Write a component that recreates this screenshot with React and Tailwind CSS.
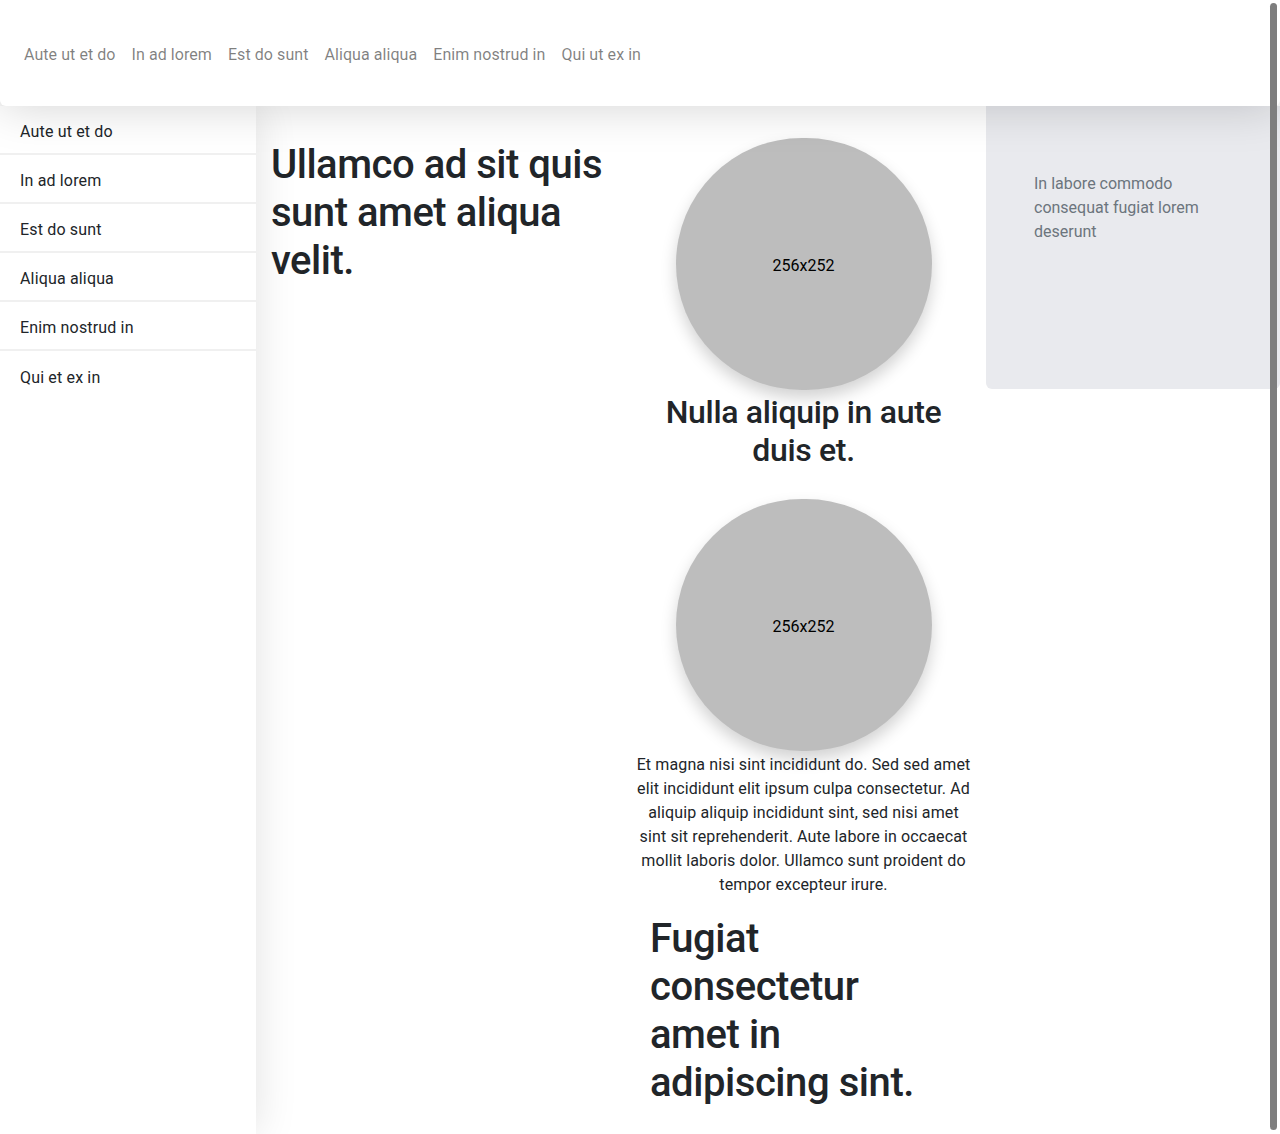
const links = ['Aute ut et do', 'In ad lorem', 'Est do sunt', 'Aliqua aliqua', 'Enim nostrud in', 'Qui ut ex in'];
const side = ['Aute ut et do', 'In ad lorem', 'Est do sunt', 'Aliqua aliqua', 'Enim nostrud in', 'Qui et ex in'];

function Placeholder() {
  return (
    <div className="mx-auto flex h-[252px] w-[256px] items-center justify-center rounded-full bg-[#bdbdbd] pt-1 text-base text-black shadow-[0_8px_16px_rgba(0,0,0,0.18)]">
      256x252
    </div>
  );
}

export default function App() {
  return (
    <div className="relative min-h-[1134px] overflow-hidden bg-white text-[#212529]" style={{ fontFamily: 'Roboto, "Noto Sans", sans-serif' }}>
      <header className="relative z-20 flex h-[106px] items-center rounded-b-md bg-white px-4 pt-1 shadow-[0_0_48px_rgba(0,0,0,0.18)]">
        <nav className="flex">
          {links.map((l) => (
            <a key={l} href="#" className="px-2 text-base tracking-[0.004em] text-[rgba(0,0,0,0.5)]">{l}</a>
          ))}
        </nav>
      </header>

      <div className="flex">
        <aside className="relative z-10 min-h-[1028px] w-[256px] shrink-0 bg-white shadow-[0_0_40px_rgba(0,0,0,0.12)]">
          {side.map((s, i) => (
            <div key={s} className={`flex h-[49px] items-center pl-5 pt-1 text-base tracking-[0.01em] ${i < side.length - 1 ? 'border-b-2 border-[#f0f0f0]' : ''}`}>{s}</div>
          ))}
        </aside>

        <main className="grid w-[730px] shrink-0 grid-cols-2">
          <div className="pl-[15px] pr-2 pt-[35px]">
            <h1 className="text-[40px] font-medium leading-[48px] tracking-[-0.012em]">Ullamco ad sit quis sunt amet aliqua velit.</h1>
          </div>
          <div className="px-[15px] pt-[32px] text-center">
            <Placeholder />
            <h2 className="mt-[3px] text-[32px] font-medium leading-[38px] tracking-[-0.01em]">Nulla aliquip in aute duis et.</h2>
            <div className="mt-[30px]">
              <Placeholder />
            </div>
            <p className="mt-[2px] text-base leading-6 tracking-[0.008em]">Et magna nisi sint incididunt do. Sed sed amet elit incididunt elit ipsum culpa consectetur. Ad aliquip aliquip incididunt sint, sed nisi amet sint sit reprehenderit. Aute labore in occaecat mollit laboris dolor. Ullamco sunt proident do tempor excepteur irure.</p>
            <h1 className="mt-[18px] w-[300px] pl-[14px] text-left text-[40px] font-medium leading-[48px] tracking-[-0.011em]">Fugiat consectetur amet in adipiscing sint.</h1>
          </div>
        </main>

        <section className="h-[283px] flex-1 rounded-b-md bg-[#e9eaee] px-12 pt-[66px]">
          <p className="text-base leading-6 text-[#6c757d]">In labore commodo consequat fugiat lorem deserunt</p>
        </section>
      </div>

      <div className="absolute right-[3px] top-[3px] z-30 h-[1127px] w-[7px] rounded-full bg-[#7e7e7e]" />
    </div>
  );
}
